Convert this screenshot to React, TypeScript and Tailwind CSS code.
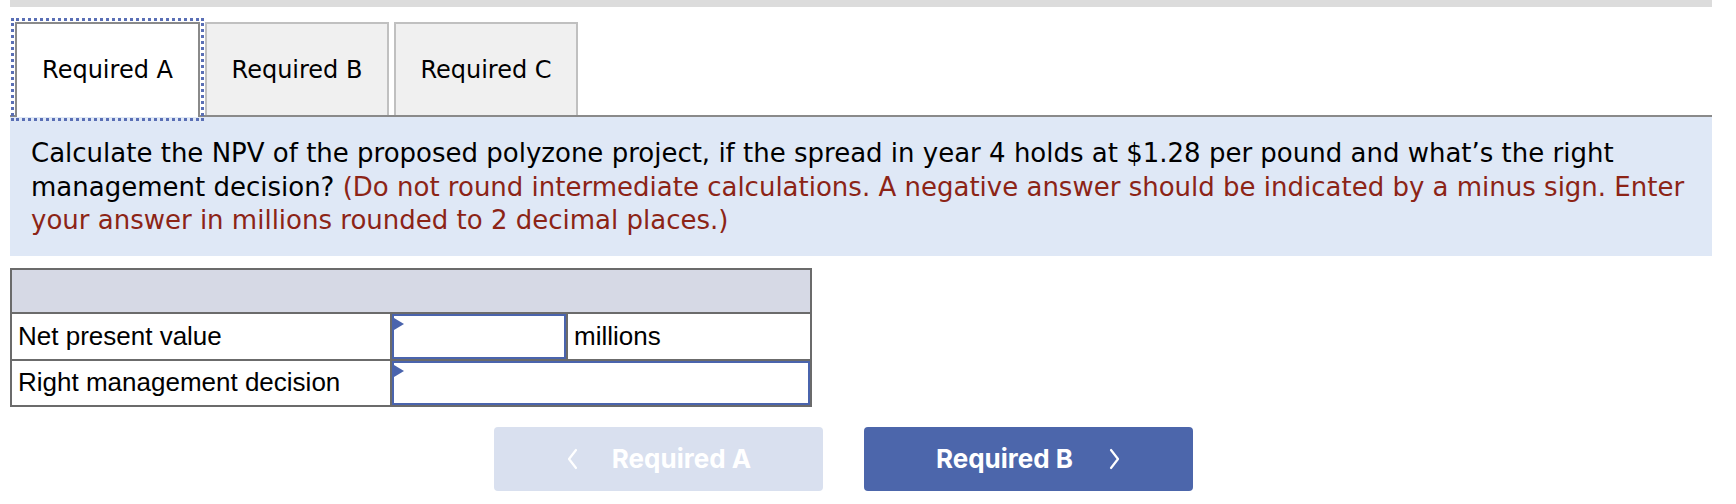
import React from 'react';

const tabs = ['Required A', 'Required B', 'Required C'];

const Marker = () => (
  <span className="absolute left-0 top-[2px] h-0 w-0 border-y-[6px] border-y-transparent border-l-[10px] border-l-[#4a64ad]" />
);

const ChevronLeft = () => (
  <svg width="12" height="22" viewBox="0 0 12 22" fill="none" className="shrink-0">
    <path d="M10 2 L3 11 L10 20" stroke="white" strokeWidth="2.2" strokeLinecap="round" strokeLinejoin="round" />
  </svg>
);

const ChevronRight = () => (
  <svg width="12" height="22" viewBox="0 0 12 22" fill="none" className="shrink-0">
    <path d="M2 2 L9 11 L2 20" stroke="white" strokeWidth="2.2" strokeLinecap="round" strokeLinejoin="round" />
  </svg>
);

export default function App() {
  return (
    <div className="min-h-[504px] bg-white">
      <div className="ml-[10px] w-[1702px]">
        <div className="h-[7px] bg-[#dcdcdc]" />

        {/* tab strip */}
        <div className="mt-[15px] flex gap-[5px] border-b-2 border-[#8a8a8a] pl-[5px]">
          {tabs.map((t, i) => (
            <div
              key={t}
              className={
                i === 0
                  ? 'relative z-10 -mb-[2px] flex h-[95px] w-[185px] items-center justify-center border-x-2 border-t-2 border-[#8a8a8a] bg-white pb-[2px] text-[24px] text-black outline-[3px] outline-offset-[1px] outline-dotted outline-[#5a6fb5]'
                  : 'flex h-[93px] w-[184px] items-center justify-center border-x-2 border-t-2 border-[#c0c0c0] bg-[#f0f0f0] text-[24px] text-black'
              }
              style={{ fontFamily: '"DejaVu Sans", Verdana, sans-serif' }}
            >
              {t}
            </div>
          ))}
        </div>

        {/* question */}
        <div
          className="bg-[#dfe8f6] pb-[18px] pl-[21px] pr-[8px] pt-[20px] text-[26px] leading-[33.5px] text-black"
          style={{ fontFamily: '"DejaVu Sans", Verdana, sans-serif' }}
        >
          Calculate the NPV of the proposed polyzone project, if the spread in year 4 holds at $1.28 per pound and what’s the right management decision?{' '}
          <span className="text-[#8c2416]">
            (Do not round intermediate calculations. A negative answer should be indicated by a minus sign. Enter your answer in millions rounded to 2 decimal places.)
          </span>
        </div>

        {/* answer table */}
        <div
          className="mt-[12px] w-[802px] border-2 border-[#6b6b6b] text-[26px] text-black"
          style={{ fontFamily: '"Liberation Sans", Arial, sans-serif' }}
        >
          <div className="h-[44px] border-b-2 border-[#6b6b6b] bg-[#d6d9e5]" />
          <div className="flex h-[47px] border-b-2 border-[#6b6b6b]">
            <div className="flex w-[380px] items-center border-r-2 border-[#6b6b6b] pl-[6px]">Net present value</div>
            <div className="relative w-[174px] border-2 border-[#4a64ad] bg-white">
              <Marker />
            </div>
            <div className="flex flex-1 items-center border-l-2 border-[#6b6b6b] pl-[6px]">millions</div>
          </div>
          <div className="flex h-[44px]">
            <div className="flex w-[380px] items-center border-r-2 border-[#6b6b6b] pl-[6px]">Right management decision</div>
            <div className="relative flex-1 border-2 border-[#4a64ad] bg-white">
              <Marker />
            </div>
          </div>
        </div>

        {/* navigation */}
        <div
          className="ml-[484px] mt-[20px] flex gap-[41px] text-[26px] font-bold text-white"
          style={{ fontFamily: 'Inter, "Open Sans", sans-serif' }}
        >
          <button className="flex h-[64px] w-[329px] items-center justify-center gap-[34px] rounded-[4px] bg-[#d9e0ef]">
            <ChevronLeft />
            <span>Required A</span>
          </button>
          <button className="flex h-[64px] w-[329px] items-center justify-center gap-[36px] rounded-[4px] bg-[#4c66ab]">
            <span>Required B</span>
            <ChevronRight />
          </button>
        </div>
      </div>
    </div>
  );
}
